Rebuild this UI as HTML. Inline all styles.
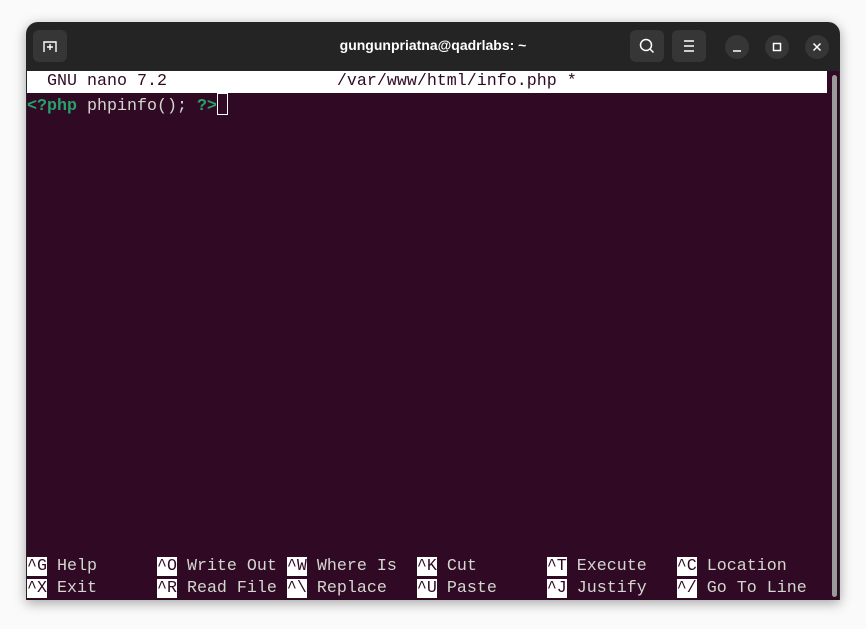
<!DOCTYPE html>
<html><head><style>
body{margin:0;width:866px;height:629px;background:#fafafa;position:relative;overflow:hidden;font-family:"Liberation Sans",sans-serif}
.win{position:absolute;left:26px;top:22px;width:814px;height:578px;background:#242424;border-radius:12px 12px 0 0;box-shadow:0 3px 12px rgba(0,0,0,.35);overflow:hidden}
.hdr{position:absolute;left:0;top:0;width:814px;height:48px}
.btn{position:absolute;top:8px;width:34px;height:32px;background:#363636;border-radius:6px}
.circ{position:absolute;top:13px;width:24px;height:24px;background:#363636;border-radius:50%}
.title{position:absolute;left:0;right:0;top:15px;text-align:center;color:#fff;font-weight:bold;font-size:14px}
.term{position:absolute;left:1px;top:49px;width:812px;height:529px;background:#300a24;font-family:"Liberation Mono",monospace;font-size:16.67px;color:#d3d7cf}
.row{position:absolute;left:0;height:22px;line-height:22px;white-space:pre}
.inv{background:#fff;color:#300a24}
.g{color:#26a269;font-weight:bold}
.sb{position:absolute;left:805px;top:4px;width:5px;height:522px;background:#9a9a9a;border-radius:3px}
</style></head><body>
<div class="win">
 <div class="hdr">
  <div class="btn" style="left:7px"><svg width="34" height="32"><path d="M11 22V12h12v10M17 14v6M14 17h6" stroke="#fff" stroke-width="1.4" fill="none"/></svg></div>
  <div class="title">gungunpriatna@qadrlabs: ~</div>
  <div class="btn" style="left:604px"><svg width="34" height="32"><circle cx="16" cy="15" r="5.5" stroke="#fff" stroke-width="1.5" fill="none"/><path d="M20 19l3.5 3.5" stroke="#fff" stroke-width="1.5"/></svg></div>
  <div class="btn" style="left:646px"><svg width="34" height="32"><path d="M12 11h10M12 16h10M12 21h10" stroke="#fff" stroke-width="1.4"/></svg></div>
  <div class="circ" style="left:699px"><svg width="24" height="24"><path d="M8 16h8" stroke="#fff" stroke-width="1.5"/></svg></div>
  <div class="circ" style="left:739px"><svg width="24" height="24"><rect x="8.5" y="8.5" width="7" height="7" stroke="#fff" stroke-width="1.5" fill="none"/></svg></div>
  <div class="circ" style="left:779px"><svg width="24" height="24"><path d="M8.5 8.5l7 7M15.5 8.5l-7 7" stroke="#fff" stroke-width="1.5"/></svg></div>
 </div>
 <div class="term">
  <div class="row inv" style="top:0;width:800px">  GNU nano 7.2                 /var/www/html/info.php *</div>
  <div class="row" style="top:22px"><span class="g">&lt;?php</span> phpinfo(); <span class="g">?&gt;</span><span style="display:inline-block;width:9px;height:20px;border:1px solid #fff;vertical-align:-5px"></span></div>
  <div class="row" style="top:485px"><span class="inv">^G</span> Help      <span class="inv">^O</span> Write Out <span class="inv">^W</span> Where Is  <span class="inv">^K</span> Cut       <span class="inv">^T</span> Execute   <span class="inv">^C</span> Location</div>
  <div class="row" style="top:507px"><span class="inv">^X</span> Exit      <span class="inv">^R</span> Read File <span class="inv">^\</span> Replace   <span class="inv">^U</span> Paste     <span class="inv">^J</span> Justify   <span class="inv">^/</span> Go To Line</div>
  <div class="sb"></div>
 </div>
</div>
</body></html>
